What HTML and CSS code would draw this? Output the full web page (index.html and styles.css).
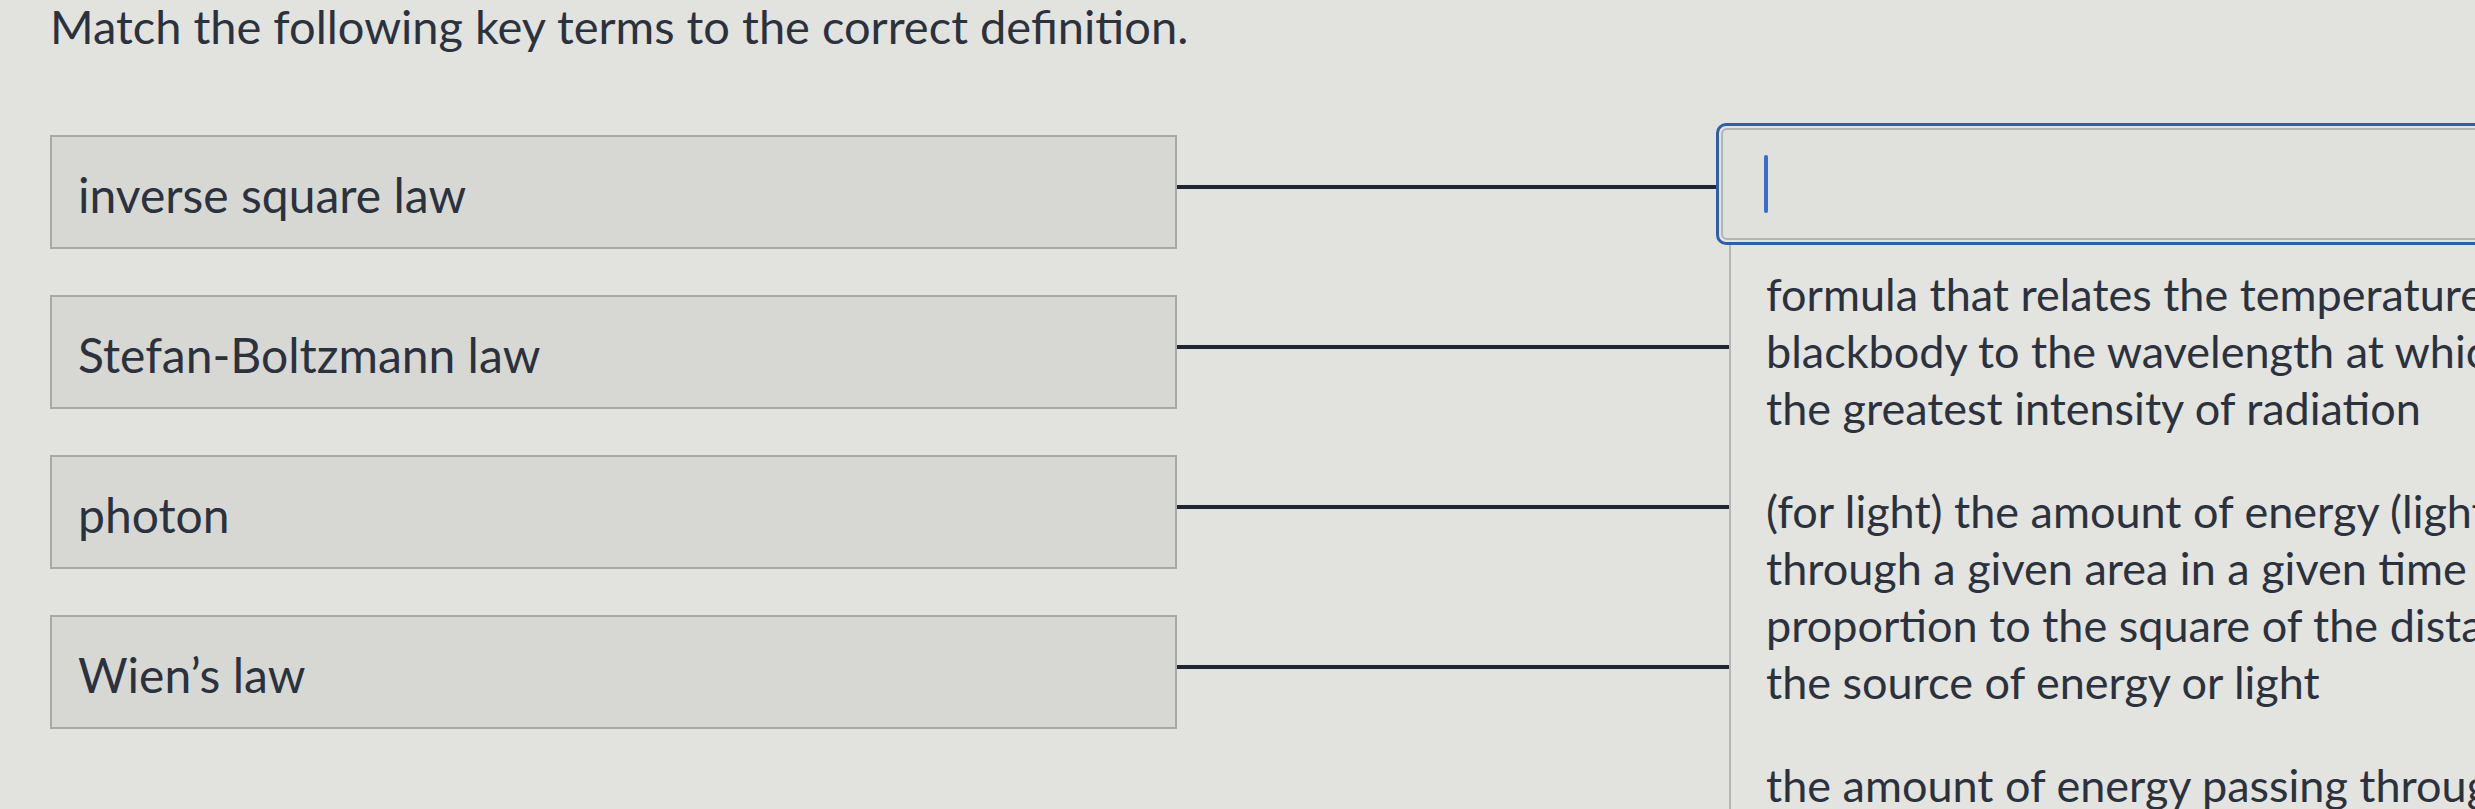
FILE: index.html
```html
<!DOCTYPE html>
<html lang="en">
<head>
  <meta charset="UTF-8">
  <meta name="viewport" content="width=device-width, initial-scale=1.0">
  <title>Matching - Key Terms</title>
  <link rel="stylesheet" href="styles.css">
</head>
<body>
  <div class="quiz">
    <h1 class="prompt">Match the following key terms to the correct definition.</h1>

    <div class="matching">
      <div class="pair">
        <div class="term">inverse square law</div>
        <div class="connector"></div>
        <div class="slot slot-active">
          <div class="slot-field"><span class="caret"></span></div>
        </div>
      </div>
      <div class="pair">
        <div class="term">Stefan-Boltzmann law</div>
        <div class="connector connector-long"></div>
      </div>
      <div class="pair">
        <div class="term">photon</div>
        <div class="connector connector-long"></div>
      </div>
      <div class="pair">
        <div class="term">Wien’s law</div>
        <div class="connector connector-long"></div>
      </div>

      <!-- open answer list under the focused slot -->
      <ul class="choices">
        <li>formula that relates the temperature of a<br>blackbody to the wavelength at which it emits<br>the greatest intensity of radiation</li>
        <li>(for light) the amount of energy (light) passing<br>through a given area in a given time decreases in<br>proportion to the square of the distance from<br>the source of energy or light</li>
        <li>the amount of energy passing through a given area</li>
      </ul>
    </div>
  </div>
</body>
</html>
```

FILE: styles.css
```css
/***----BASIC----***/
html {
  overflow: hidden;
}
body {
  margin: 0;
  height: 100vh;
  overflow: hidden;
  background: #e2e2df;
  color: #2b323d;
  font-family: 'Lato', 'Noto Sans', sans-serif;
}
.quiz {
  padding-left: 50px;
}

/***----Title----***/
.prompt {
  margin: 0;
  font-size: 47px;
  font-weight: 400;
  line-height: 52px;
}

/***----Matching rows----***/
.matching {
  position: relative;
  margin-top: 83px;
  display: flex;
  flex-direction: column;
  gap: 46px;
}
.pair {
  display: grid;
  grid-template-columns: 1127px 539px 900px;
  align-items: start;
}
.term {
  box-sizing: border-box;
  height: 114px;
  padding: 4px 0 0 26px;
  display: flex;
  align-items: center;
  background: #d7d7d4;
  border: 2px solid #a8a8a6;
  font-size: 48px;
}
.connector {
  height: 4px;
  margin-top: 50px;
  background: #1d2631;
}
.connector-long {
  grid-column: 2 / -1;
}

/* focused drop slot */
.slot-active {
  margin-top: -12px;
  padding: 2px;
  border: 3px solid #2c61aa;
  border-radius: 10px;
}
.slot-field {
  box-sizing: border-box;
  height: 112px;
  padding-left: 41px;
  display: flex;
  align-items: center;
  border: 2px solid #b4b4b2;
  border-radius: 6px;
  background: #e0e0dd;
}
.caret {
  width: 4px;
  height: 58px;
  background: #3a6cc9;
  border-radius: 2px;
}

/***----Answer list----***/
.choices {
  position: absolute;
  top: 110px;
  left: 1679px;
  width: 1000px;
  height: 800px;
  margin: 0;
  padding: 21px 0 0 35px;
  list-style: none;
  background: #e3e3e0;
  border-left: 2px solid #b6b6b4;
}
.choices li {
  font-size: 45px;
  line-height: 57px;
  white-space: nowrap;
  margin-bottom: 46px;
}
```
